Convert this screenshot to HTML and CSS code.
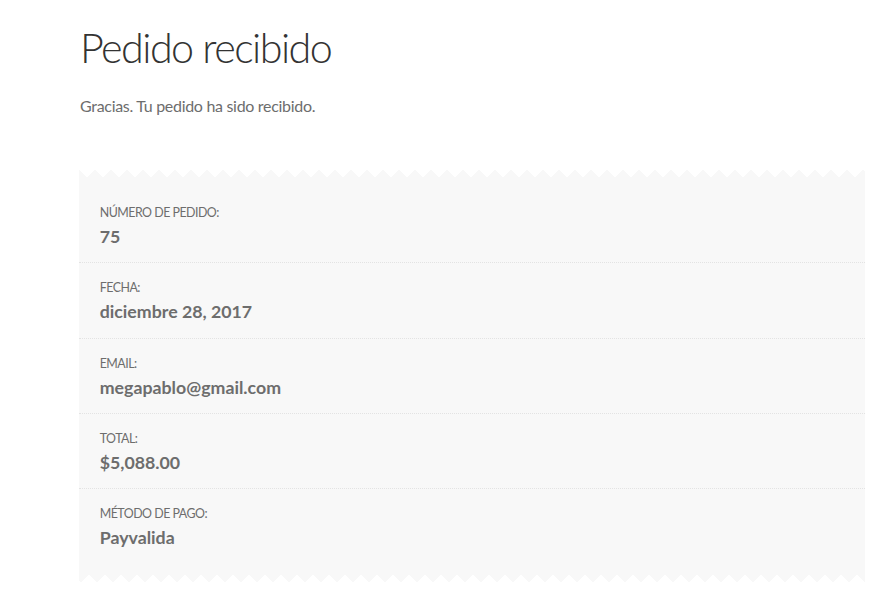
FILE: index.html
```html
<!DOCTYPE html>
<html lang="es">
<head>
<meta charset="utf-8">
<title>Pedido recibido</title>
<link rel="stylesheet" href="styles.css">
</head>
<body>
<main class="page">
  <h1 class="title">Pedido recibido</h1>
  <p class="thanks">Gracias. Tu pedido ha sido recibido.</p>
  <div class="receipt">
    <ul class="order-details">
      <li class="detail"><span class="label">Número de pedido:</span><strong class="value">75</strong></li>
      <li class="detail"><span class="label">Fecha:</span><strong class="value">diciembre 28, 2017</strong></li>
      <li class="detail"><span class="label">Email:</span><strong class="value">megapablo@gmail.com</strong></li>
      <li class="detail"><span class="label">Total:</span><strong class="value">$5,088.00</strong></li>
      <li class="detail"><span class="label">Método de pago:</span><strong class="value">Payvalida</strong></li>
    </ul>
  </div>
</main>
</body>
</html>
```

FILE: styles.css
```css
* { box-sizing: border-box; }

html, body {
  margin: 0;
  padding: 0;
  background: #ffffff;
}

body {
  font-family: "Lato", "Liberation Sans", sans-serif;
  font-size: 16px;
  line-height: 1.618;
  color: #6d6d6d;
}

.page {
  width: 786px;
  margin-left: 79px;
  padding-top: 22px;
}

.title {
  margin: 0 0 0 1px;
  font-size: 41.3px;
  font-weight: 300;
  line-height: 1.24;
  letter-spacing: -1.55px;
  color: #333333;
}

.thanks {
  margin: 20px 0 0 1px;
  font-size: 16px;
  letter-spacing: -0.3px;
}

.receipt {
  margin-top: 45px;
}

.receipt::before,
.receipt::after {
  content: "";
  display: block;
  height: 16px;
  background:
    linear-gradient(-45deg, #f8f8f8 33.333%, transparent 33.333%),
    linear-gradient(45deg, #f8f8f8 33.333%, transparent 33.333%);
  background-size: 16px 16px;
}

.receipt::after {
  transform: rotate(180deg);
}

.order-details {
  list-style: none;
  margin: 0;
  padding: 0;
  background: #f8f8f8;
}

.detail {
  padding: 1em 1.618em;
  font-size: 12.8px;
  text-transform: uppercase;
  border-bottom: 1px dotted #e3e3e3;
}

.detail:first-child {
  padding-top: 1.618em;
}

.detail:last-child {
  border-bottom: 0;
  padding-bottom: 1.618em;
}

.label {
  display: block;
  padding-top: 2px;
  font-size: 12.4px;
  letter-spacing: -0.5px;
  color: #6d6d6d;
}

.value {
  display: block;
  font-size: 1.387em;
  line-height: 26.7px;
  font-weight: 700;
  text-transform: none;
  color: #6d6d6d;
}
```
